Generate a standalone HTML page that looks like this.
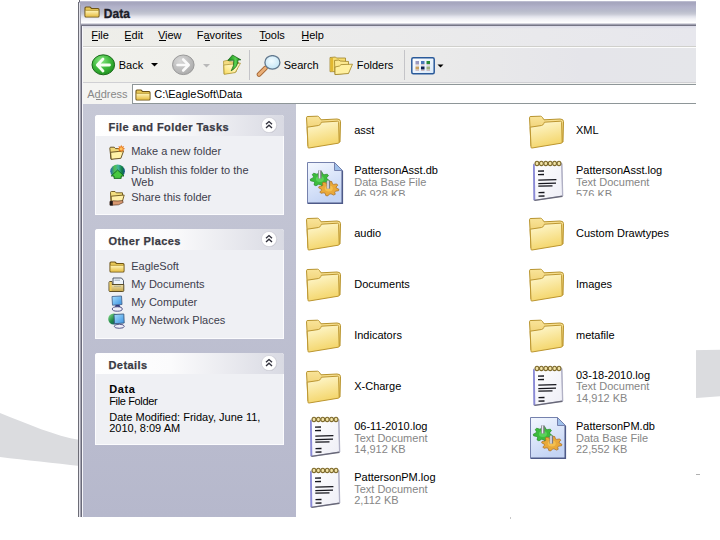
<!DOCTYPE html>
<html><head><meta charset="utf-8">
<style>
*{margin:0;padding:0;box-sizing:border-box}
html,body{width:720px;height:540px;overflow:hidden;background:#fff}
body{position:relative;font-family:"Liberation Sans",sans-serif;font-size:11px;color:#000}
.a{position:absolute}
.t{position:absolute;white-space:nowrap;line-height:12px}
.u{text-decoration:underline;text-decoration-thickness:1px;text-underline-offset:1.5px}
</style></head><body>

<svg class="a" style="left:0;top:0" width="720" height="540">
 <path d="M0,413 C28,424 55,436 80,440 L80,466 C55,463 25,460 0,457 Z" fill="#dbdcdf"/>
 <path d="M690,350.3 L720,349.7 L720,396.3 L690,398.5 Z" fill="#dbdcdf"/>
</svg>
<div class="a" style="left:0;top:0;width:696px;height:540px;overflow:hidden">
<div class="a" style="left:78px;top:1px;width:618px;height:25px;border-top-left-radius:3px;
 background:linear-gradient(#c6c6d8 0px,#a6a6be 1.5px,#a8a8c0 3px,#b2b2ca 6px,#b8bbcb 10px,#c6c8d4 13px,#e0e1ea 15.5px,#f2f2f6 18px,#fafafc 20.5px,#ffffff 21.5px,#d8d8e0 22.5px,#a0a0b0 23.5px,#747484 24.5px)"></div>
<div class="a" style="left:78px;top:2px;width:1px;height:515px;background:#6c6c76"></div>
<div class="a" style="left:79px;top:0px;width:1px;height:2px;background:#6c6c76"></div>
<div class="a" style="left:79px;top:3px;width:1px;height:514px;background:#e2e2ea"></div>
<div class="a" style="left:80px;top:5px;width:1px;height:512px;background:#a4a4b0"></div>
<div class="a" style="left:81px;top:26px;width:1px;height:491px;background:#6a6a7a"></div>
<div class="a" style="left:82px;top:26px;width:1px;height:492px;background:#f6f6fa"></div>
<div class="a" style="left:83px;top:26px;width:613px;height:22px;background:linear-gradient(#dcdcea 0px,rgba(232,232,242,0) 3px,rgba(0,0,0,0) 20px,#d0d0cc 20px,#d0d0cc 21px,#fcfcfc 21px),linear-gradient(90deg,#eeeee9 0px,#ebebeb 300px,#e7e7ed 613px)"></div>
<div class="a" style="left:83px;top:48px;width:613px;height:35px;background:linear-gradient(90deg,#f1f1ec 0px,#ececea 300px,#e5e5ea 500px,#e5e6ea 613px);border-bottom:1px solid #d0d0d4"></div>
<div class="a" style="left:83px;top:83px;width:613px;height:21px;background:#f4f4f2"></div>
<div class="a" style="left:132px;top:84px;width:570px;height:20px;background:#fff;border:1px solid #8e9698"></div>
<div class="a" style="left:83px;top:104px;width:213px;height:413px;background:linear-gradient(#c6c8d6,#b6b8cc)"></div>
<div class="a" style="left:296px;top:104px;width:400px;height:413px;background:#fff"></div>
<div class="t" style="left:91.2px;top:28.8px;font-size:11px;color:#000;">File</div>
<div class="t" style="left:124.2px;top:28.8px;font-size:11px;color:#000;">Edit</div>
<div class="t" style="left:157.9px;top:28.8px;font-size:11px;color:#000;">View</div>
<div class="t" style="left:196.7px;top:28.8px;font-size:11px;color:#000;">Favorites</div>
<div class="t" style="left:259.2px;top:28.8px;font-size:11px;color:#000;">Tools</div>
<div class="t" style="left:301.2px;top:28.8px;font-size:11px;color:#000;">Help</div>
<div class="a" style="left:92px;top:40px;width:6px;height:1px;background:#000"></div>
<div class="a" style="left:125px;top:40px;width:6px;height:1px;background:#000"></div>
<div class="a" style="left:158.5px;top:40px;width:7px;height:1px;background:#000"></div>
<div class="a" style="left:204.5px;top:40px;width:5.5px;height:1px;background:#000"></div>
<div class="a" style="left:259.5px;top:40px;width:7px;height:1px;background:#000"></div>
<div class="a" style="left:302px;top:40px;width:7px;height:1px;background:#000"></div>
<div class="a" style="left:95.5px;top:99px;width:6px;height:1px;background:#888"></div>
<div class="t" style="left:103.8px;top:7.7px;font-size:12px;color:#1c1c28;font-weight:bold;-webkit-text-stroke:0.35px #1c1c28;">Data</div>
<div class="t" style="left:118.7px;top:58.5px;font-size:11px;color:#000;">Back</div>
<div class="t" style="left:283.7px;top:58.5px;font-size:11px;color:#000;">Search</div>
<div class="t" style="left:356.7px;top:58.5px;font-size:11px;color:#000;">Folders</div>
<div class="t" style="left:87.2px;top:87.5px;font-size:11px;color:#888;">Address</div>
<div class="t" style="left:154.2px;top:87.5px;font-size:11px;color:#000;">C:\EagleSoft\Data</div>
<div class="a" style="left:95px;top:115px;width:189px;height:100px;background:#eff0f4;border-radius:3px 3px 0 0;border:1px solid #fbfbfd;border-top:0"></div>
<div class="a" style="left:95px;top:115px;width:189px;height:21px;border-radius:3px 3px 0 0;background:linear-gradient(90deg,#ffffff 0%,#fbfbfc 40%,#d9dae3 100%)"></div>
<div class="t" style="left:108.5px;top:121.0px;font-size:11px;color:#3a3a44;font-weight:bold;letter-spacing:0.42px;-webkit-text-stroke:0.25px #3a3a44;">File and Folder Tasks</div>
<svg class="a" style="left:260px;top:116.3px" width="18" height="18"><circle cx="9.3" cy="9.3" r="7.8" fill="#b8b8c4"/><circle cx="9" cy="9" r="7.6" fill="#fff" stroke="#d4d4dc" stroke-width="0.8"/><path d="M6,8.3 L9,5.6 L12,8.3 M6,11.9 L9,9.2 L12,11.9" fill="none" stroke="#30303c" stroke-width="1.4"/></svg>
<div class="a" style="left:95px;top:229px;width:189px;height:110px;background:#eff0f4;border-radius:3px 3px 0 0;border:1px solid #fbfbfd;border-top:0"></div>
<div class="a" style="left:95px;top:229px;width:189px;height:21px;border-radius:3px 3px 0 0;background:linear-gradient(90deg,#ffffff 0%,#fbfbfc 40%,#d9dae3 100%)"></div>
<div class="t" style="left:108.5px;top:235.2px;font-size:11px;color:#3a3a44;font-weight:bold;letter-spacing:0.42px;-webkit-text-stroke:0.25px #3a3a44;">Other Places</div>
<svg class="a" style="left:260px;top:230.3px" width="18" height="18"><circle cx="9.3" cy="9.3" r="7.8" fill="#b8b8c4"/><circle cx="9" cy="9" r="7.6" fill="#fff" stroke="#d4d4dc" stroke-width="0.8"/><path d="M6,8.3 L9,5.6 L12,8.3 M6,11.9 L9,9.2 L12,11.9" fill="none" stroke="#30303c" stroke-width="1.4"/></svg>
<div class="a" style="left:95px;top:353px;width:189px;height:92px;background:#eff0f4;border-radius:3px 3px 0 0;border:1px solid #fbfbfd;border-top:0"></div>
<div class="a" style="left:95px;top:353px;width:189px;height:21px;border-radius:3px 3px 0 0;background:linear-gradient(90deg,#ffffff 0%,#fbfbfc 40%,#d9dae3 100%)"></div>
<div class="t" style="left:108.5px;top:359.2px;font-size:11px;color:#3a3a44;font-weight:bold;letter-spacing:0.42px;-webkit-text-stroke:0.25px #3a3a44;">Details</div>
<svg class="a" style="left:260px;top:354.3px" width="18" height="18"><circle cx="9.3" cy="9.3" r="7.8" fill="#b8b8c4"/><circle cx="9" cy="9" r="7.6" fill="#fff" stroke="#d4d4dc" stroke-width="0.8"/><path d="M6,8.3 L9,5.6 L12,8.3 M6,11.9 L9,9.2 L12,11.9" fill="none" stroke="#30303c" stroke-width="1.4"/></svg>
<div class="t" style="left:131.2px;top:144.9px;font-size:11px;color:#3d3d4c;">Make a new folder</div>
<div class="t" style="left:131.2px;top:164.0px;font-size:11px;color:#3d3d4c;">Publish this folder to the</div>
<div class="t" style="left:131.2px;top:176.0px;font-size:11px;color:#3d3d4c;">Web</div>
<div class="t" style="left:131.2px;top:191.2px;font-size:11px;color:#3d3d4c;">Share this folder</div>
<div class="t" style="left:131.2px;top:259.8px;font-size:11px;color:#3d3d4c;">EagleSoft</div>
<div class="t" style="left:131.2px;top:278.0px;font-size:11px;color:#3d3d4c;">My Documents</div>
<div class="t" style="left:131.2px;top:296.3px;font-size:11px;color:#3d3d4c;">My Computer</div>
<div class="t" style="left:131.2px;top:314.2px;font-size:11px;color:#3d3d4c;">My Network Places</div>
<div class="t" style="left:109.2px;top:382.5px;font-size:11px;color:#000;font-weight:bold;letter-spacing:0.6px;">Data</div>
<div class="t" style="left:109.2px;top:394.5px;font-size:11px;color:#000;letter-spacing:-0.35px;">File Folder</div>
<div class="t" style="left:109.2px;top:411.0px;font-size:11px;color:#000;">Date Modified: Friday, June 11,</div>
<div class="t" style="left:109.2px;top:422.0px;font-size:11px;color:#000;">2010, 8:09 AM</div>
<div class="a" style="left:84px;top:5.9px;line-height:0"><svg width="16" height="12" viewBox="0 0 16 12"><defs>
<linearGradient id="sfg" x1="0" y1="0" x2="0" y2="1"><stop offset="0" stop-color="#fff4b8"/><stop offset="1" stop-color="#e8c048"/></linearGradient></defs>
<path d="M1,2 Q1,1 2,1 L6,1 L7.5,2.5 L14,2.5 Q15,2.5 15,3.5 L15,10 Q15,11 14,11 L2,11 Q1,11 1,10 Z" fill="#e8c858" stroke="#6e5416" stroke-width="1.1"/>
<path d="M1.6,4.6 L14.4,4.6 L14.4,10.4 L1.6,10.4 Z" fill="url(#sfg)"/>
<path d="M1.6,4.3 L14.4,4.3" stroke="#a88828" stroke-width="0.7"/>
</svg></div>
<div class="a" style="left:134.5px;top:88.5px;line-height:0"><svg width="16" height="12" viewBox="0 0 16 12"><defs>
<linearGradient id="sfg" x1="0" y1="0" x2="0" y2="1"><stop offset="0" stop-color="#fff4b8"/><stop offset="1" stop-color="#e8c048"/></linearGradient></defs>
<path d="M1,2 Q1,1 2,1 L6,1 L7.5,2.5 L14,2.5 Q15,2.5 15,3.5 L15,10 Q15,11 14,11 L2,11 Q1,11 1,10 Z" fill="#e8c858" stroke="#6e5416" stroke-width="1.1"/>
<path d="M1.6,4.6 L14.4,4.6 L14.4,10.4 L1.6,10.4 Z" fill="url(#sfg)"/>
<path d="M1.6,4.3 L14.4,4.3" stroke="#a88828" stroke-width="0.7"/>
</svg></div>
<div class="a" style="left:91px;top:54px;line-height:0"><svg width="26" height="24" viewBox="0 0 26 24"><defs>
<radialGradient id="bkg" cx="0.4" cy="0.3" r="0.75"><stop offset="0" stop-color="#8ae884"/><stop offset="0.55" stop-color="#3cb83a"/><stop offset="1" stop-color="#1e8e1e"/></radialGradient></defs>
<ellipse cx="12.3" cy="10.8" rx="11.3" ry="10" fill="url(#bkg)" stroke="#1b6a1b" stroke-width="1"/>
<path d="M6.5,11 L18.5,11 M12,5 L6.3,11 L12,17" fill="none" stroke="#f6fff2" stroke-width="2.8" stroke-linecap="round" stroke-linejoin="round"/>
</svg></div>
<div class="a" style="left:151px;top:63px;line-height:0"><svg width="7" height="4" viewBox="0 0 7 4"><path d="M0,0 L7,0 L3.5,3.5 Z" fill="#000"/></svg></div>
<div class="a" style="left:171.75px;top:54.2px;line-height:0"><svg width="26" height="24" viewBox="0 0 26 24"><defs>
<radialGradient id="fwg" cx="0.35" cy="0.3" r="0.8"><stop offset="0" stop-color="#d8d8d8"/><stop offset="1" stop-color="#a8a8a8"/></radialGradient></defs>
<ellipse cx="11.3" cy="10.8" rx="10.8" ry="9.8" fill="url(#fwg)" stroke="#9a9a9a" stroke-width="1"/>
<path d="M5.5,11 L16.5,11 M11.2,5.5 L16.7,11 L11.2,16.5" fill="none" stroke="#fafafa" stroke-width="2.6" stroke-linecap="round" stroke-linejoin="round"/>
</svg></div>
<div class="a" style="left:202.5px;top:63.5px;line-height:0"><svg width="7" height="4" viewBox="0 0 7 4"><path d="M0,0 L7,0 L3.5,3.5 Z" fill="#b8b8b8"/></svg></div>
<div class="a" style="left:222px;top:54px;line-height:0"><svg width="22" height="24" viewBox="0 0 22 24"><defs>
<linearGradient id="upf" x1="0" y1="1" x2="1" y2="0"><stop offset="0" stop-color="#f8d858"/><stop offset="0.5" stop-color="#fff2b0"/><stop offset="1" stop-color="#fff6c8"/></linearGradient>
<linearGradient id="upa" x1="0" y1="0" x2="1" y2="0"><stop offset="0" stop-color="#108a10"/><stop offset="0.6" stop-color="#58d050"/><stop offset="1" stop-color="#108010"/></linearGradient></defs>
<path d="M1.5,7.2 L6,6.2 L7.5,7.6 L17,8.6 L14,18 L2,20 Z" fill="#f4dc80" stroke="#a89030" stroke-width="0.7"/>
<path d="M1.8,11 L18.5,9.2 L13.2,18.6 L2.2,20.3 Z" fill="url(#upf)" stroke="#a89030" stroke-width="0.7"/>
<path d="M10.5,1 L18.8,5.8 L16,6 Q16.2,13 9.2,16.8 Q12.2,12 11.8,6.2 L5.8,6.4 Z" fill="url(#upa)" stroke="#0e5a0e" stroke-width="0.7"/>
</svg></div>
<div class="a" style="left:255.6px;top:54.5px;line-height:0"><svg width="28" height="24" viewBox="0 0 28 24"><defs>
<radialGradient id="lens" cx="0.45" cy="0.4" r="0.6"><stop offset="0" stop-color="#f2fbff"/><stop offset="1" stop-color="#c4e6f6"/></radialGradient></defs>
<path d="M3,19.5 L9.5,13" stroke="#a86a38" stroke-width="4.6" stroke-linecap="round"/>
<path d="M3,19.5 L9.5,13" stroke="#eab078" stroke-width="2.8" stroke-linecap="round"/>
<ellipse cx="16.4" cy="7.4" rx="7.5" ry="6.8" fill="url(#lens)" stroke="#62788e" stroke-width="1.3"/>
</svg></div>
<div class="a" style="left:329px;top:56px;line-height:0"><svg width="26" height="20" viewBox="0 0 26 20">
<path d="M1,1.5 L6.5,1 L7.5,2 L16.5,2 L16.5,15.5 L1,15.7 Z" fill="#f6dc70" stroke="#a08428" stroke-width="0.8"/>
<path d="M1.5,2 L4,2 L4,15.3 L1.5,15.3 Z" fill="#e2b830"/>
<path d="M5.5,4.5 L10,4 L11,5 L19.5,5.5 L19.5,17 L6,18.5 Z" fill="#fbe890" stroke="#a08428" stroke-width="0.8"/>
<path d="M6,11 L10.5,10 L12,8.6 L23.5,8.2 L19.5,17.5 L6,18.6 Z" fill="#fff0a0" stroke="#a08428" stroke-width="0.8"/>
</svg></div>
<div class="a" style="left:411px;top:56.5px;line-height:0"><svg width="36" height="18" viewBox="0 0 36 18"><defs>
<linearGradient id="vg" x1="0" y1="0" x2="1" y2="1"><stop offset="0" stop-color="#ffffff"/><stop offset="1" stop-color="#d8e8f8"/></linearGradient></defs>
<rect x="0.8" y="0.8" width="22.4" height="16" rx="1.5" fill="url(#vg)" stroke="#2a5a9a" stroke-width="1.5"/>
<rect x="4.5" y="4" width="3.5" height="3" fill="#9a9ac0"/><rect x="10" y="4" width="3.5" height="3" fill="#4a78b8"/><rect x="15.5" y="4" width="3.5" height="3" fill="#2a8a3a"/>
<rect x="4.5" y="9.5" width="3.5" height="3" fill="#c8a060"/><rect x="10" y="9.5" width="3.5" height="3" fill="#102050"/><rect x="15.5" y="9.5" width="3.5" height="3" fill="#a0b080"/>
<path d="M4.5,7.8 L8,7.8 M10,7.8 L13.5,7.8 M15.5,7.8 L19,7.8 M4.5,13.3 L8,13.3 M10,13.3 L13.5,13.3 M15.5,13.3 L19,13.3" stroke="#c0a0a0" stroke-width="0.8"/>
<path d="M26.5,7.5 L32.5,7.5 L29.5,10.5 Z" fill="#000"/>
</svg></div>
<div class="a" style="left:249px;top:50px;width:1px;height:30px;background:#c4c4c8"></div>
<div class="a" style="left:404px;top:50px;width:1px;height:30px;background:#c4c4c8"></div>
<div class="a" style="left:108px;top:144px;line-height:0"><svg width="18" height="17" viewBox="0 0 18 17">
<path d="M1.8,4.2 Q1.8,3.2 2.8,3.2 L6.2,3.2 L7.6,4.6 L12.5,4.6 L12.5,13 L3,15.2 Z" fill="#f0d878" stroke="#5e4818" stroke-width="0.9"/>
<path d="M2.6,8.3 L15.6,6.9 L12.9,14.3 L3.2,15.3 Z" fill="#fff2a8" stroke="#5e4818" stroke-width="0.9"/>
<path d="M13.20,0.80 L14.04,2.77 L16.03,1.97 L15.23,3.96 L17.20,4.80 L15.23,5.64 L16.03,7.63 L14.04,6.83 L13.20,8.80 L12.36,6.83 L10.37,7.63 L11.17,5.64 L9.20,4.80 L11.17,3.96 L10.37,1.97 L12.36,2.77 Z" fill="#e87818"/>
<circle cx="13.2" cy="4.8" r="1.6" fill="#ffc060"/>
</svg></div>
<div class="a" style="left:109.5px;top:163.5px;line-height:0"><svg width="18" height="16" viewBox="0 0 18 16"><defs>
<linearGradient id="gl" x1="0" y1="0" x2="1" y2="0"><stop offset="0" stop-color="#2060a8"/><stop offset="0.3" stop-color="#50c050"/><stop offset="0.55" stop-color="#40b0a0"/><stop offset="0.8" stop-color="#108040"/><stop offset="1" stop-color="#1a4a90"/></linearGradient></defs>
<ellipse cx="7.6" cy="7.2" rx="7.3" ry="6.6" fill="url(#gl)"/>
<path d="M1.2,12 L7.6,6 L14,12 L11.2,12 L11.2,14.4 L4,14.4 L4,12 Z" fill="#48c840" stroke="#0a5a10" stroke-width="0.8"/>
</svg></div>
<div class="a" style="left:108.5px;top:189.5px;line-height:0"><svg width="18" height="16" viewBox="0 0 18 16">
<path d="M1.5,2.5 Q1.5,1.5 2.5,1.5 L6,1.5 L7.2,2.8 L13.5,2.8 L13.5,11 L2,12.5 Z" fill="#f4e080" stroke="#6a5418" stroke-width="0.9"/>
<path d="M2.2,6.2 L15.2,5 L13.4,11.4 L2.4,12.4 Z" fill="#fff0a8" stroke="#6a5418" stroke-width="0.9"/>
<path d="M1,11.5 L4,10.8 L9,11 L13.5,10.5 L14.2,12.5 L9.5,14.8 L3,15.2 L1,15 Z" fill="#d89870" stroke="#4a2a18" stroke-width="0.6"/>
<path d="M0.8,11.2 L3.8,11 L3.8,15.4 L0.8,15.4 Z" fill="#201818"/>
</svg></div>
<div class="a" style="left:108.5px;top:260.5px;line-height:0"><svg width="16" height="12" viewBox="0 0 16 12"><defs>
<linearGradient id="sfg" x1="0" y1="0" x2="0" y2="1"><stop offset="0" stop-color="#fff4b8"/><stop offset="1" stop-color="#e8c048"/></linearGradient></defs>
<path d="M1,2 Q1,1 2,1 L6,1 L7.5,2.5 L14,2.5 Q15,2.5 15,3.5 L15,10 Q15,11 14,11 L2,11 Q1,11 1,10 Z" fill="#e8c858" stroke="#6e5416" stroke-width="1.1"/>
<path d="M1.6,4.6 L14.4,4.6 L14.4,10.4 L1.6,10.4 Z" fill="url(#sfg)"/>
<path d="M1.6,4.3 L14.4,4.3" stroke="#a88828" stroke-width="0.7"/>
</svg></div>
<div class="a" style="left:108.3px;top:276.8px;line-height:0"><svg width="18" height="16" viewBox="0 0 18 16"><defs>
<linearGradient id="mdg" x1="0" y1="0" x2="0" y2="1"><stop offset="0" stop-color="#fbf6dc"/><stop offset="1" stop-color="#c8a848"/></linearGradient></defs>
<path d="M5,1 L13.5,1 L15.5,3.5 L15.5,8 L5,8 Z" fill="#eef4fa" stroke="#40485a" stroke-width="0.9"/>
<path d="M6.5,3.2 L12,3.2" stroke="#8898a8" stroke-width="0.8"/>
<path d="M1,5.5 Q1,4.5 2,4.5 L4,4.5 L4,7.5 L15.8,7.5 L15.8,13.5 Q15.8,14.5 14.8,14.5 L2,14.5 Q1,14.5 1,13.5 Z" fill="url(#mdg)" stroke="#4e4018" stroke-width="0.9"/>
<path d="M1.6,5 L3.6,5 L3.6,14 L1.6,14 Z" fill="#f0cc58"/>
<path d="M6,9.3 L13,9.3" stroke="#a8a890" stroke-width="0.8"/>
</svg></div>
<div class="a" style="left:110.3px;top:295.3px;line-height:0"><svg width="14" height="17" viewBox="0 0 14 17"><defs>
<linearGradient id="scr" x1="0" y1="0" x2="1" y2="1"><stop offset="0" stop-color="#a8e0ff"/><stop offset="1" stop-color="#3890e0"/></linearGradient></defs>
<path d="M2,1.5 L11.5,1 L12,9.5 L2.5,10.2 Z" fill="url(#scr)" stroke="#4a6890" stroke-width="0.9"/>
<path d="M5.5,10 L9.5,9.8 L10.5,12.5 L5,12.8 Z" fill="#303c80"/>
<ellipse cx="7.3" cy="14" rx="5" ry="2.2" fill="#eeeef8" stroke="#4a4a80" stroke-width="0.9"/>
</svg></div>
<div class="a" style="left:108.3px;top:312.3px;line-height:0"><svg width="18" height="17" viewBox="0 0 18 17"><defs>
<linearGradient id="gl2" x1="0" y1="0" x2="1" y2="1"><stop offset="0" stop-color="#90e890"/><stop offset="0.5" stop-color="#208848"/><stop offset="1" stop-color="#103a80"/></linearGradient>
<linearGradient id="scr2" x1="0" y1="0" x2="1" y2="1"><stop offset="0" stop-color="#a8e0ff"/><stop offset="1" stop-color="#3890e0"/></linearGradient></defs>
<circle cx="5.8" cy="7" r="5.6" fill="url(#gl2)"/>
<path d="M6,2.5 L15.8,2 L16.2,11 L6.5,11.8 Z" fill="url(#scr2)" stroke="#3a5a80" stroke-width="0.9"/>
<ellipse cx="11.3" cy="14.3" rx="5" ry="2" fill="#eeeef8" stroke="#4a4a80" stroke-width="0.9"/>
</svg></div>
<div class="a" style="left:304px;top:114.8px;line-height:0"><svg width="40" height="36" viewBox="0 0 40 36"><defs>
<linearGradient id="fg" x1="0" y1="0" x2="0.3" y2="1"><stop offset="0" stop-color="#fffad6"/><stop offset="1" stop-color="#f4d66c"/></linearGradient>
<linearGradient id="bg" x1="0" y1="0" x2="0" y2="1"><stop offset="0" stop-color="#f9e49a"/><stop offset="1" stop-color="#e6bc48"/></linearGradient></defs>
<path d="M2.5,2.5 Q2.5,1.5 4,1.5 L13.5,1.2 Q14.5,1.2 15.5,2.5 L17,4.8 L33,4 Q36.5,4 36.5,6.5 L36,27 L4,31 Z" fill="url(#bg)" stroke="#b8942e" stroke-width="1"/>
<path d="M3.2,12.2 L14.5,10.5 Q16,10.3 16.8,8.5 L17.4,7.2 L33.5,6.2 Q34.6,6.2 34.6,7.4 L35.2,27.2 Q35.2,28 34.2,28.2 L5,33 Q4,33.2 4,32.2 Z" fill="url(#fg)" stroke="#bc9630" stroke-width="1"/>
</svg></div>
<div class="t" style="left:354.2px;top:124.3px;font-size:11px;color:#000;">asst</div>
<div class="a" style="left:526.5px;top:114.8px;line-height:0"><svg width="40" height="36" viewBox="0 0 40 36"><defs>
<linearGradient id="fg" x1="0" y1="0" x2="0.3" y2="1"><stop offset="0" stop-color="#fffad6"/><stop offset="1" stop-color="#f4d66c"/></linearGradient>
<linearGradient id="bg" x1="0" y1="0" x2="0" y2="1"><stop offset="0" stop-color="#f9e49a"/><stop offset="1" stop-color="#e6bc48"/></linearGradient></defs>
<path d="M2.5,2.5 Q2.5,1.5 4,1.5 L13.5,1.2 Q14.5,1.2 15.5,2.5 L17,4.8 L33,4 Q36.5,4 36.5,6.5 L36,27 L4,31 Z" fill="url(#bg)" stroke="#b8942e" stroke-width="1"/>
<path d="M3.2,12.2 L14.5,10.5 Q16,10.3 16.8,8.5 L17.4,7.2 L33.5,6.2 Q34.6,6.2 34.6,7.4 L35.2,27.2 Q35.2,28 34.2,28.2 L5,33 Q4,33.2 4,32.2 Z" fill="url(#fg)" stroke="#bc9630" stroke-width="1"/>
</svg></div>
<div class="t" style="left:576.0px;top:124.3px;font-size:11px;color:#000;">XML</div>
<div class="a" style="left:306.4px;top:160.6px;line-height:0"><svg width="40" height="46" viewBox="0 0 40 46"><defs>
<linearGradient id="dbp" x1="0" y1="0" x2="0.4" y2="1"><stop offset="0" stop-color="#f4f8ff"/><stop offset="1" stop-color="#c4d4f4"/></linearGradient></defs>
<path d="M1.5,1.5 L28.5,1.5 L36.5,9.5 L36.5,42.5 L1.5,42.5 Z" fill="url(#dbp)" stroke="#7581ad" stroke-width="1"/>
<path d="M2,42.3 L36.3,42.3 L36.3,10" fill="none" stroke="#4e5a88" stroke-width="1.6"/>
<path d="M28.5,1.5 L28.5,9.5 L36.5,9.5 Z" fill="#9fc0ea" stroke="#7581ad" stroke-width="1"/>
<path d="M23.31,19.49 L22.65,21.08 L19.48,21.30 L18.40,22.18 L18.28,24.67 L16.26,25.26 L14.07,23.46 L12.51,23.35 L9.95,24.82 L8.10,23.97 L8.54,21.51 L7.67,20.49 L4.60,19.84 L4.30,18.18 L7.04,16.92 L7.52,15.75 L6.25,13.48 L7.73,12.26 L10.71,13.14 L12.18,12.71 L13.67,10.51 L15.81,10.66 L16.78,13.02 L18.13,13.65 L21.26,13.19 L22.45,14.59 L20.68,16.66 L20.90,17.87 Z" fill="#3cbc3c" stroke="#218a21" stroke-width="0.7"/>
<ellipse cx="13.9" cy="18" rx="4" ry="3" fill="#5ad25a"/>
<path d="M32.95,28.33 L32.56,29.74 L29.50,30.19 L28.67,31.08 L29.26,33.29 L27.59,34.08 L24.99,32.84 L23.53,33.05 L21.78,34.91 L19.82,34.62 L19.21,32.42 L17.97,31.82 L14.90,32.25 L13.80,31.05 L15.52,29.18 L15.24,28.13 L12.65,26.87 L13.04,25.46 L16.10,25.01 L16.93,24.12 L16.34,21.91 L18.01,21.12 L20.61,22.36 L22.07,22.15 L23.82,20.29 L25.78,20.58 L26.39,22.78 L27.63,23.38 L30.70,22.95 L31.80,24.15 L30.08,26.02 L30.36,27.07 Z" fill="#e9a93a" stroke="#a86a1c" stroke-width="0.7"/>
<ellipse cx="22.8" cy="27.6" rx="4" ry="3" fill="#f4c050"/>
<rect x="12.1" y="9.4" width="3.5" height="8" fill="#7a7a82"/>
<rect x="12.8" y="9.4" width="1.4" height="8" fill="#e8e8f0"/>
<rect x="20.6" y="19.6" width="3.5" height="8" fill="#7a7a82"/>
<rect x="21.3" y="19.6" width="1.4" height="8" fill="#f0f0f8"/>
</svg></div>
<div class="t" style="left:354.2px;top:164.2px;font-size:11px;color:#000;">PattersonAsst.db</div>
<div class="t" style="left:354.2px;top:176.0px;font-size:11px;color:#868686;">Data Base File</div>
<div class="t" style="left:354.2px;top:187.8px;font-size:11px;color:#868686;clip-path:inset(0.0px 0 3.8px 0);">46,928 KB</div>
<div class="a" style="left:530.6px;top:160.4px;line-height:0"><svg width="34" height="44" viewBox="0 0 34 44"><defs>
<linearGradient id="lgp" x1="0" y1="0" x2="1" y2="1"><stop offset="0" stop-color="#ffffff"/><stop offset="1" stop-color="#eeeef6"/></linearGradient></defs>
<path d="M2.5,4 L30.5,3 L31.5,36 L3,40.5 Z" fill="url(#lgp)" stroke="#a0a0bc" stroke-width="0.8"/>
<path d="M2.9,4.5 L3.4,40" stroke="#8a8ad8" stroke-width="1.8"/>
<path d="M3.5,40.4 L31.5,36.2" stroke="#686878" stroke-width="1.4"/>
<path d="M31,3.5 L31.8,36" stroke="#b0b0c4" stroke-width="1"/>
<ellipse cx="6.0" cy="3.4" rx="1.9" ry="2.2" fill="#f2e4a8" stroke="#7e6a2c" stroke-width="1.1"/><ellipse cx="10.4" cy="3.4" rx="1.9" ry="2.2" fill="#f2e4a8" stroke="#7e6a2c" stroke-width="1.1"/><ellipse cx="14.8" cy="3.4" rx="1.9" ry="2.2" fill="#f2e4a8" stroke="#7e6a2c" stroke-width="1.1"/><ellipse cx="19.2" cy="3.4" rx="1.9" ry="2.2" fill="#f2e4a8" stroke="#7e6a2c" stroke-width="1.1"/><ellipse cx="23.6" cy="3.4" rx="1.9" ry="2.2" fill="#f2e4a8" stroke="#7e6a2c" stroke-width="1.1"/><ellipse cx="28.0" cy="3.4" rx="1.9" ry="2.2" fill="#f2e4a8" stroke="#7e6a2c" stroke-width="1.1"/>
<path d="M7,11.1 L13,11 M7,14.6 L13,14.5 M7.3,20.1 L25.4,19.6 M7.3,23.6 L25,23.2 M7.3,26.1 L21.5,25.8 M7.5,32.6 L13.5,32.5 M7.5,36.1 L13.5,36" stroke="#15151c" stroke-width="1.3"/>
</svg></div>
<div class="t" style="left:576.0px;top:164.2px;font-size:11px;color:#000;">PattersonAsst.log</div>
<div class="t" style="left:576.0px;top:176.0px;font-size:11px;color:#868686;">Text Document</div>
<div class="t" style="left:576.0px;top:187.8px;font-size:11px;color:#868686;clip-path:inset(0.0px 0 3.8px 0);">576 KB</div>
<div class="a" style="left:304px;top:217.0px;line-height:0"><svg width="40" height="36" viewBox="0 0 40 36"><defs>
<linearGradient id="fg" x1="0" y1="0" x2="0.3" y2="1"><stop offset="0" stop-color="#fffad6"/><stop offset="1" stop-color="#f4d66c"/></linearGradient>
<linearGradient id="bg" x1="0" y1="0" x2="0" y2="1"><stop offset="0" stop-color="#f9e49a"/><stop offset="1" stop-color="#e6bc48"/></linearGradient></defs>
<path d="M2.5,2.5 Q2.5,1.5 4,1.5 L13.5,1.2 Q14.5,1.2 15.5,2.5 L17,4.8 L33,4 Q36.5,4 36.5,6.5 L36,27 L4,31 Z" fill="url(#bg)" stroke="#b8942e" stroke-width="1"/>
<path d="M3.2,12.2 L14.5,10.5 Q16,10.3 16.8,8.5 L17.4,7.2 L33.5,6.2 Q34.6,6.2 34.6,7.4 L35.2,27.2 Q35.2,28 34.2,28.2 L5,33 Q4,33.2 4,32.2 Z" fill="url(#fg)" stroke="#bc9630" stroke-width="1"/>
</svg></div>
<div class="t" style="left:354.2px;top:226.5px;font-size:11px;color:#000;">audio</div>
<div class="a" style="left:526.5px;top:217.0px;line-height:0"><svg width="40" height="36" viewBox="0 0 40 36"><defs>
<linearGradient id="fg" x1="0" y1="0" x2="0.3" y2="1"><stop offset="0" stop-color="#fffad6"/><stop offset="1" stop-color="#f4d66c"/></linearGradient>
<linearGradient id="bg" x1="0" y1="0" x2="0" y2="1"><stop offset="0" stop-color="#f9e49a"/><stop offset="1" stop-color="#e6bc48"/></linearGradient></defs>
<path d="M2.5,2.5 Q2.5,1.5 4,1.5 L13.5,1.2 Q14.5,1.2 15.5,2.5 L17,4.8 L33,4 Q36.5,4 36.5,6.5 L36,27 L4,31 Z" fill="url(#bg)" stroke="#b8942e" stroke-width="1"/>
<path d="M3.2,12.2 L14.5,10.5 Q16,10.3 16.8,8.5 L17.4,7.2 L33.5,6.2 Q34.6,6.2 34.6,7.4 L35.2,27.2 Q35.2,28 34.2,28.2 L5,33 Q4,33.2 4,32.2 Z" fill="url(#fg)" stroke="#bc9630" stroke-width="1"/>
</svg></div>
<div class="t" style="left:576.0px;top:226.5px;font-size:11px;color:#000;">Custom Drawtypes</div>
<div class="a" style="left:304px;top:268.1px;line-height:0"><svg width="40" height="36" viewBox="0 0 40 36"><defs>
<linearGradient id="fg" x1="0" y1="0" x2="0.3" y2="1"><stop offset="0" stop-color="#fffad6"/><stop offset="1" stop-color="#f4d66c"/></linearGradient>
<linearGradient id="bg" x1="0" y1="0" x2="0" y2="1"><stop offset="0" stop-color="#f9e49a"/><stop offset="1" stop-color="#e6bc48"/></linearGradient></defs>
<path d="M2.5,2.5 Q2.5,1.5 4,1.5 L13.5,1.2 Q14.5,1.2 15.5,2.5 L17,4.8 L33,4 Q36.5,4 36.5,6.5 L36,27 L4,31 Z" fill="url(#bg)" stroke="#b8942e" stroke-width="1"/>
<path d="M3.2,12.2 L14.5,10.5 Q16,10.3 16.8,8.5 L17.4,7.2 L33.5,6.2 Q34.6,6.2 34.6,7.4 L35.2,27.2 Q35.2,28 34.2,28.2 L5,33 Q4,33.2 4,32.2 Z" fill="url(#fg)" stroke="#bc9630" stroke-width="1"/>
</svg></div>
<div class="t" style="left:354.2px;top:277.6px;font-size:11px;color:#000;">Documents</div>
<div class="a" style="left:526.5px;top:268.1px;line-height:0"><svg width="40" height="36" viewBox="0 0 40 36"><defs>
<linearGradient id="fg" x1="0" y1="0" x2="0.3" y2="1"><stop offset="0" stop-color="#fffad6"/><stop offset="1" stop-color="#f4d66c"/></linearGradient>
<linearGradient id="bg" x1="0" y1="0" x2="0" y2="1"><stop offset="0" stop-color="#f9e49a"/><stop offset="1" stop-color="#e6bc48"/></linearGradient></defs>
<path d="M2.5,2.5 Q2.5,1.5 4,1.5 L13.5,1.2 Q14.5,1.2 15.5,2.5 L17,4.8 L33,4 Q36.5,4 36.5,6.5 L36,27 L4,31 Z" fill="url(#bg)" stroke="#b8942e" stroke-width="1"/>
<path d="M3.2,12.2 L14.5,10.5 Q16,10.3 16.8,8.5 L17.4,7.2 L33.5,6.2 Q34.6,6.2 34.6,7.4 L35.2,27.2 Q35.2,28 34.2,28.2 L5,33 Q4,33.2 4,32.2 Z" fill="url(#fg)" stroke="#bc9630" stroke-width="1"/>
</svg></div>
<div class="t" style="left:576.0px;top:277.6px;font-size:11px;color:#000;">Images</div>
<div class="a" style="left:304px;top:319.2px;line-height:0"><svg width="40" height="36" viewBox="0 0 40 36"><defs>
<linearGradient id="fg" x1="0" y1="0" x2="0.3" y2="1"><stop offset="0" stop-color="#fffad6"/><stop offset="1" stop-color="#f4d66c"/></linearGradient>
<linearGradient id="bg" x1="0" y1="0" x2="0" y2="1"><stop offset="0" stop-color="#f9e49a"/><stop offset="1" stop-color="#e6bc48"/></linearGradient></defs>
<path d="M2.5,2.5 Q2.5,1.5 4,1.5 L13.5,1.2 Q14.5,1.2 15.5,2.5 L17,4.8 L33,4 Q36.5,4 36.5,6.5 L36,27 L4,31 Z" fill="url(#bg)" stroke="#b8942e" stroke-width="1"/>
<path d="M3.2,12.2 L14.5,10.5 Q16,10.3 16.8,8.5 L17.4,7.2 L33.5,6.2 Q34.6,6.2 34.6,7.4 L35.2,27.2 Q35.2,28 34.2,28.2 L5,33 Q4,33.2 4,32.2 Z" fill="url(#fg)" stroke="#bc9630" stroke-width="1"/>
</svg></div>
<div class="t" style="left:354.2px;top:328.7px;font-size:11px;color:#000;">Indicators</div>
<div class="a" style="left:526.5px;top:319.2px;line-height:0"><svg width="40" height="36" viewBox="0 0 40 36"><defs>
<linearGradient id="fg" x1="0" y1="0" x2="0.3" y2="1"><stop offset="0" stop-color="#fffad6"/><stop offset="1" stop-color="#f4d66c"/></linearGradient>
<linearGradient id="bg" x1="0" y1="0" x2="0" y2="1"><stop offset="0" stop-color="#f9e49a"/><stop offset="1" stop-color="#e6bc48"/></linearGradient></defs>
<path d="M2.5,2.5 Q2.5,1.5 4,1.5 L13.5,1.2 Q14.5,1.2 15.5,2.5 L17,4.8 L33,4 Q36.5,4 36.5,6.5 L36,27 L4,31 Z" fill="url(#bg)" stroke="#b8942e" stroke-width="1"/>
<path d="M3.2,12.2 L14.5,10.5 Q16,10.3 16.8,8.5 L17.4,7.2 L33.5,6.2 Q34.6,6.2 34.6,7.4 L35.2,27.2 Q35.2,28 34.2,28.2 L5,33 Q4,33.2 4,32.2 Z" fill="url(#fg)" stroke="#bc9630" stroke-width="1"/>
</svg></div>
<div class="t" style="left:576.0px;top:328.7px;font-size:11px;color:#000;">metafile</div>
<div class="a" style="left:304px;top:370.3px;line-height:0"><svg width="40" height="36" viewBox="0 0 40 36"><defs>
<linearGradient id="fg" x1="0" y1="0" x2="0.3" y2="1"><stop offset="0" stop-color="#fffad6"/><stop offset="1" stop-color="#f4d66c"/></linearGradient>
<linearGradient id="bg" x1="0" y1="0" x2="0" y2="1"><stop offset="0" stop-color="#f9e49a"/><stop offset="1" stop-color="#e6bc48"/></linearGradient></defs>
<path d="M2.5,2.5 Q2.5,1.5 4,1.5 L13.5,1.2 Q14.5,1.2 15.5,2.5 L17,4.8 L33,4 Q36.5,4 36.5,6.5 L36,27 L4,31 Z" fill="url(#bg)" stroke="#b8942e" stroke-width="1"/>
<path d="M3.2,12.2 L14.5,10.5 Q16,10.3 16.8,8.5 L17.4,7.2 L33.5,6.2 Q34.6,6.2 34.6,7.4 L35.2,27.2 Q35.2,28 34.2,28.2 L5,33 Q4,33.2 4,32.2 Z" fill="url(#fg)" stroke="#bc9630" stroke-width="1"/>
</svg></div>
<div class="t" style="left:354.2px;top:379.8px;font-size:11px;color:#000;">X-Charge</div>
<div class="a" style="left:530.6px;top:364.8px;line-height:0"><svg width="34" height="44" viewBox="0 0 34 44"><defs>
<linearGradient id="lgp" x1="0" y1="0" x2="1" y2="1"><stop offset="0" stop-color="#ffffff"/><stop offset="1" stop-color="#eeeef6"/></linearGradient></defs>
<path d="M2.5,4 L30.5,3 L31.5,36 L3,40.5 Z" fill="url(#lgp)" stroke="#a0a0bc" stroke-width="0.8"/>
<path d="M2.9,4.5 L3.4,40" stroke="#8a8ad8" stroke-width="1.8"/>
<path d="M3.5,40.4 L31.5,36.2" stroke="#686878" stroke-width="1.4"/>
<path d="M31,3.5 L31.8,36" stroke="#b0b0c4" stroke-width="1"/>
<ellipse cx="6.0" cy="3.4" rx="1.9" ry="2.2" fill="#f2e4a8" stroke="#7e6a2c" stroke-width="1.1"/><ellipse cx="10.4" cy="3.4" rx="1.9" ry="2.2" fill="#f2e4a8" stroke="#7e6a2c" stroke-width="1.1"/><ellipse cx="14.8" cy="3.4" rx="1.9" ry="2.2" fill="#f2e4a8" stroke="#7e6a2c" stroke-width="1.1"/><ellipse cx="19.2" cy="3.4" rx="1.9" ry="2.2" fill="#f2e4a8" stroke="#7e6a2c" stroke-width="1.1"/><ellipse cx="23.6" cy="3.4" rx="1.9" ry="2.2" fill="#f2e4a8" stroke="#7e6a2c" stroke-width="1.1"/><ellipse cx="28.0" cy="3.4" rx="1.9" ry="2.2" fill="#f2e4a8" stroke="#7e6a2c" stroke-width="1.1"/>
<path d="M7,11.1 L13,11 M7,14.6 L13,14.5 M7.3,20.1 L25.4,19.6 M7.3,23.6 L25,23.2 M7.3,26.1 L21.5,25.8 M7.5,32.6 L13.5,32.5 M7.5,36.1 L13.5,36" stroke="#15151c" stroke-width="1.3"/>
</svg></div>
<div class="t" style="left:576.0px;top:368.6px;font-size:11px;color:#000;">03-18-2010.log</div>
<div class="t" style="left:576.0px;top:380.4px;font-size:11px;color:#868686;">Text Document</div>
<div class="t" style="left:576.0px;top:392.2px;font-size:11px;color:#868686;">14,912 KB</div>
<div class="a" style="left:308.1px;top:415.9px;line-height:0"><svg width="34" height="44" viewBox="0 0 34 44"><defs>
<linearGradient id="lgp" x1="0" y1="0" x2="1" y2="1"><stop offset="0" stop-color="#ffffff"/><stop offset="1" stop-color="#eeeef6"/></linearGradient></defs>
<path d="M2.5,4 L30.5,3 L31.5,36 L3,40.5 Z" fill="url(#lgp)" stroke="#a0a0bc" stroke-width="0.8"/>
<path d="M2.9,4.5 L3.4,40" stroke="#8a8ad8" stroke-width="1.8"/>
<path d="M3.5,40.4 L31.5,36.2" stroke="#686878" stroke-width="1.4"/>
<path d="M31,3.5 L31.8,36" stroke="#b0b0c4" stroke-width="1"/>
<ellipse cx="6.0" cy="3.4" rx="1.9" ry="2.2" fill="#f2e4a8" stroke="#7e6a2c" stroke-width="1.1"/><ellipse cx="10.4" cy="3.4" rx="1.9" ry="2.2" fill="#f2e4a8" stroke="#7e6a2c" stroke-width="1.1"/><ellipse cx="14.8" cy="3.4" rx="1.9" ry="2.2" fill="#f2e4a8" stroke="#7e6a2c" stroke-width="1.1"/><ellipse cx="19.2" cy="3.4" rx="1.9" ry="2.2" fill="#f2e4a8" stroke="#7e6a2c" stroke-width="1.1"/><ellipse cx="23.6" cy="3.4" rx="1.9" ry="2.2" fill="#f2e4a8" stroke="#7e6a2c" stroke-width="1.1"/><ellipse cx="28.0" cy="3.4" rx="1.9" ry="2.2" fill="#f2e4a8" stroke="#7e6a2c" stroke-width="1.1"/>
<path d="M7,11.1 L13,11 M7,14.6 L13,14.5 M7.3,20.1 L25.4,19.6 M7.3,23.6 L25,23.2 M7.3,26.1 L21.5,25.8 M7.5,32.6 L13.5,32.5 M7.5,36.1 L13.5,36" stroke="#15151c" stroke-width="1.3"/>
</svg></div>
<div class="t" style="left:354.2px;top:419.7px;font-size:11px;color:#000;">06-11-2010.log</div>
<div class="t" style="left:354.2px;top:431.5px;font-size:11px;color:#868686;">Text Document</div>
<div class="t" style="left:354.2px;top:443.3px;font-size:11px;color:#868686;">14,912 KB</div>
<div class="a" style="left:528.9px;top:416.1px;line-height:0"><svg width="40" height="46" viewBox="0 0 40 46"><defs>
<linearGradient id="dbp" x1="0" y1="0" x2="0.4" y2="1"><stop offset="0" stop-color="#f4f8ff"/><stop offset="1" stop-color="#c4d4f4"/></linearGradient></defs>
<path d="M1.5,1.5 L28.5,1.5 L36.5,9.5 L36.5,42.5 L1.5,42.5 Z" fill="url(#dbp)" stroke="#7581ad" stroke-width="1"/>
<path d="M2,42.3 L36.3,42.3 L36.3,10" fill="none" stroke="#4e5a88" stroke-width="1.6"/>
<path d="M28.5,1.5 L28.5,9.5 L36.5,9.5 Z" fill="#9fc0ea" stroke="#7581ad" stroke-width="1"/>
<path d="M23.31,19.49 L22.65,21.08 L19.48,21.30 L18.40,22.18 L18.28,24.67 L16.26,25.26 L14.07,23.46 L12.51,23.35 L9.95,24.82 L8.10,23.97 L8.54,21.51 L7.67,20.49 L4.60,19.84 L4.30,18.18 L7.04,16.92 L7.52,15.75 L6.25,13.48 L7.73,12.26 L10.71,13.14 L12.18,12.71 L13.67,10.51 L15.81,10.66 L16.78,13.02 L18.13,13.65 L21.26,13.19 L22.45,14.59 L20.68,16.66 L20.90,17.87 Z" fill="#3cbc3c" stroke="#218a21" stroke-width="0.7"/>
<ellipse cx="13.9" cy="18" rx="4" ry="3" fill="#5ad25a"/>
<path d="M32.95,28.33 L32.56,29.74 L29.50,30.19 L28.67,31.08 L29.26,33.29 L27.59,34.08 L24.99,32.84 L23.53,33.05 L21.78,34.91 L19.82,34.62 L19.21,32.42 L17.97,31.82 L14.90,32.25 L13.80,31.05 L15.52,29.18 L15.24,28.13 L12.65,26.87 L13.04,25.46 L16.10,25.01 L16.93,24.12 L16.34,21.91 L18.01,21.12 L20.61,22.36 L22.07,22.15 L23.82,20.29 L25.78,20.58 L26.39,22.78 L27.63,23.38 L30.70,22.95 L31.80,24.15 L30.08,26.02 L30.36,27.07 Z" fill="#e9a93a" stroke="#a86a1c" stroke-width="0.7"/>
<ellipse cx="22.8" cy="27.6" rx="4" ry="3" fill="#f4c050"/>
<rect x="12.1" y="9.4" width="3.5" height="8" fill="#7a7a82"/>
<rect x="12.8" y="9.4" width="1.4" height="8" fill="#e8e8f0"/>
<rect x="20.6" y="19.6" width="3.5" height="8" fill="#7a7a82"/>
<rect x="21.3" y="19.6" width="1.4" height="8" fill="#f0f0f8"/>
</svg></div>
<div class="t" style="left:576.0px;top:419.7px;font-size:11px;color:#000;">PattersonPM.db</div>
<div class="t" style="left:576.0px;top:431.5px;font-size:11px;color:#868686;">Data Base File</div>
<div class="t" style="left:576.0px;top:443.3px;font-size:11px;color:#868686;">22,552 KB</div>
<div class="a" style="left:308.1px;top:467.0px;line-height:0"><svg width="34" height="44" viewBox="0 0 34 44"><defs>
<linearGradient id="lgp" x1="0" y1="0" x2="1" y2="1"><stop offset="0" stop-color="#ffffff"/><stop offset="1" stop-color="#eeeef6"/></linearGradient></defs>
<path d="M2.5,4 L30.5,3 L31.5,36 L3,40.5 Z" fill="url(#lgp)" stroke="#a0a0bc" stroke-width="0.8"/>
<path d="M2.9,4.5 L3.4,40" stroke="#8a8ad8" stroke-width="1.8"/>
<path d="M3.5,40.4 L31.5,36.2" stroke="#686878" stroke-width="1.4"/>
<path d="M31,3.5 L31.8,36" stroke="#b0b0c4" stroke-width="1"/>
<ellipse cx="6.0" cy="3.4" rx="1.9" ry="2.2" fill="#f2e4a8" stroke="#7e6a2c" stroke-width="1.1"/><ellipse cx="10.4" cy="3.4" rx="1.9" ry="2.2" fill="#f2e4a8" stroke="#7e6a2c" stroke-width="1.1"/><ellipse cx="14.8" cy="3.4" rx="1.9" ry="2.2" fill="#f2e4a8" stroke="#7e6a2c" stroke-width="1.1"/><ellipse cx="19.2" cy="3.4" rx="1.9" ry="2.2" fill="#f2e4a8" stroke="#7e6a2c" stroke-width="1.1"/><ellipse cx="23.6" cy="3.4" rx="1.9" ry="2.2" fill="#f2e4a8" stroke="#7e6a2c" stroke-width="1.1"/><ellipse cx="28.0" cy="3.4" rx="1.9" ry="2.2" fill="#f2e4a8" stroke="#7e6a2c" stroke-width="1.1"/>
<path d="M7,11.1 L13,11 M7,14.6 L13,14.5 M7.3,20.1 L25.4,19.6 M7.3,23.6 L25,23.2 M7.3,26.1 L21.5,25.8 M7.5,32.6 L13.5,32.5 M7.5,36.1 L13.5,36" stroke="#15151c" stroke-width="1.3"/>
</svg></div>
<div class="t" style="left:354.2px;top:470.8px;font-size:11px;color:#000;">PattersonPM.log</div>
<div class="t" style="left:354.2px;top:482.6px;font-size:11px;color:#868686;">Text Document</div>
<div class="t" style="left:354.2px;top:494.4px;font-size:11px;color:#868686;">2,112 KB</div>
</div>
<div class="a" style="left:696px;top:474px;width:4px;height:1px;background:#b0b0b0"></div>
<div class="a" style="left:510px;top:517px;width:1px;height:2px;background:#c8c8c8"></div>
</body></html>
